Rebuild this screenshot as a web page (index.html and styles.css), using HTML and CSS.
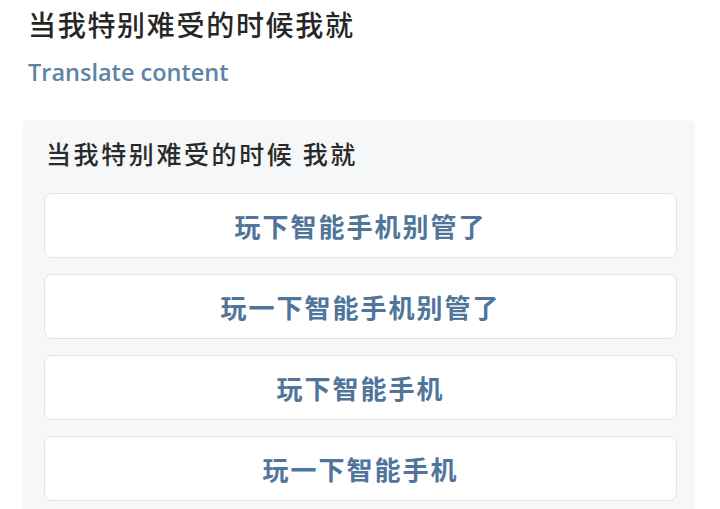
FILE: index.html
```html
<!DOCTYPE html>
<html lang="zh">
<head>
<meta charset="utf-8">
<link rel="stylesheet" href="styles.css">
</head>
<body>
<div class="page">
  <h1 class="title">当我特别难受的时候我就</h1>
  <div class="translate">Translate content</div>
  <div class="panel">
    <div class="question">当我特别难受的时候 我就</div>
    <div class="options">
      <div class="option">玩下智能手机别管了</div>
      <div class="option">玩一下智能手机别管了</div>
      <div class="option">玩下智能手机</div>
      <div class="option">玩一下智能手机</div>
    </div>
  </div>
</div>
</body>
</html>
```
FILE: styles.css
```css
html, body {
  margin: 0;
  padding: 0;
  background: #ffffff;
}
body {
  font-family: "Noto Sans CJK SC", "Noto Sans", sans-serif;
  overflow: hidden;
  height: 509px;
}
.page {
  padding: 4px 0 0 23px;
}
.title {
  margin: 0 0 0 5px;
  font-size: 28px;
  font-weight: 500;
  letter-spacing: 1.7px;
  line-height: 40px;
  color: #262626;
}
.translate {
  margin: 12px 0 0 5px;
  font-family: "Open Sans", "Noto Sans", sans-serif;
  font-size: 23.5px;
  font-weight: 600;
  line-height: 32px;
  color: #5d84a6;
}
.panel {
  margin-top: 32px;
  width: 672px;
  background: #f5f7f8;
  padding: 11px 18px 20px 21px;
  box-sizing: border-box;
  border-radius: 6px 6px 0 0;
  box-shadow: 0 0 3px rgba(0, 0, 0, 0.03);
}
.question {
  margin-left: 2px;
  font-size: 25px;
  letter-spacing: 2.6px;
  font-weight: 500;
  line-height: 44px;
  color: #2a2a2a;
}
.options {
  margin-top: 18px;
  display: flex;
  flex-direction: column;
  gap: 16px;
}
.option {
  height: 65px;
  box-sizing: border-box;
  background: #ffffff;
  border: 1px solid #e1e5e8;
  border-radius: 8px;
  display: flex;
  align-items: center;
  justify-content: center;
  font-size: 26px;
  font-weight: 700;
  letter-spacing: 2px;
  color: #50759a;
}
```
